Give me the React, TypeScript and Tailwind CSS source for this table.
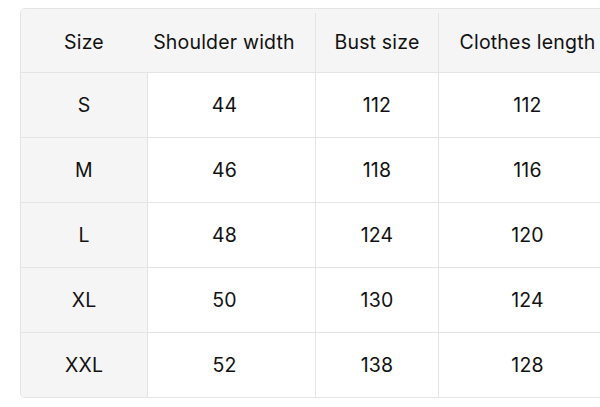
const headers = ['Size', 'Shoulder width', 'Bust size', 'Clothes length']

const rows = [
  ['S', '44', '112', '112'],
  ['M', '46', '118', '116'],
  ['L', '48', '124', '120'],
  ['XL', '50', '130', '124'],
  ['XXL', '52', '138', '128'],
]

const cols = 'grid grid-cols-[126px_168px_123px_178px]'

function App() {
  return (
    <div
      className="h-[407px] w-[600px] overflow-hidden bg-white text-[19.5px] tracking-[0.01em] text-[#111111]"
      style={{ fontFamily: 'Inter, "Noto Sans", sans-serif' }}
    >
      <div className="ml-[20px] mt-[8px] w-[596px] overflow-hidden rounded-l-[5px] border border-[#e4e4e4]">
        <div className={`${cols} h-[64px] border-b border-[#e4e4e4] bg-[#f5f5f5] pt-[4px]`}>
          {headers.map((h, i) => (
            <div
              key={h}
              className={
                'flex items-center justify-center whitespace-nowrap ' +
                (i === 1 ? 'pr-[14px] ' : '') +
                (i >= 2 ? 'border-l border-[#e4e4e4]' : '')
              }
            >
              {h}
            </div>
          ))}
        </div>
        {rows.map((r, ri) => (
          <div
            key={r[0]}
            className={`${cols} ${ri < rows.length - 1 ? 'h-[65px] border-b border-[#e4e4e4]' : 'h-[64px]'}`}
          >
            {r.map((c, i) => (
              <div
                key={i}
                className={
                  'flex items-center justify-center pt-[2px] ' +
                  (i === 0 ? 'bg-[#f5f5f5] ' : 'border-l border-[#e4e4e4] ') +
                  (i === 1 ? 'pr-[14px]' : '')
                }
              >
                {c}
              </div>
            ))}
          </div>
        ))}
      </div>
    </div>
  )
}

export default App
